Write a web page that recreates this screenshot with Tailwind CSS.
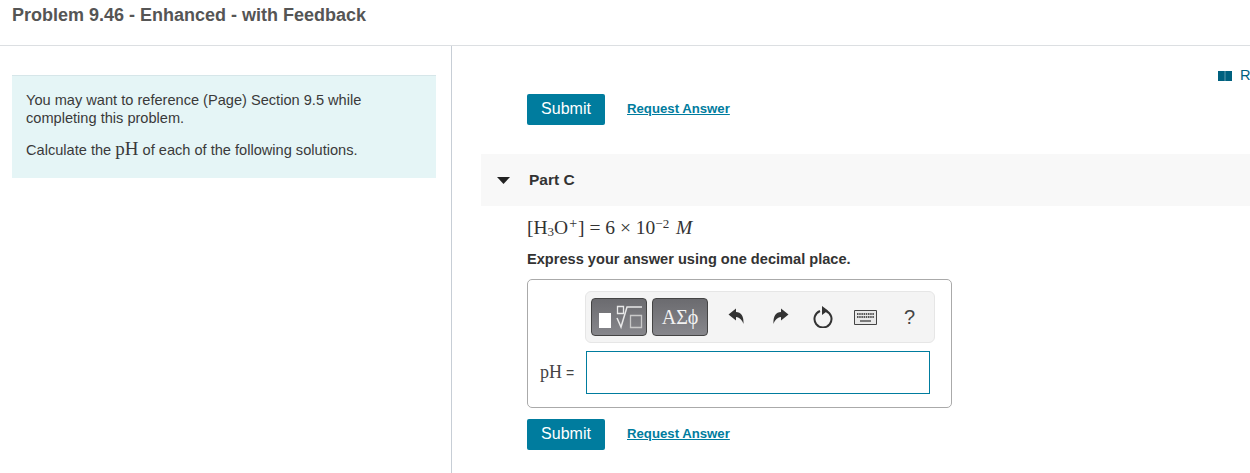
<!DOCTYPE html>
<html lang="en">
<head>
  <meta charset="UTF-8" />
  <title>Problem 9.46</title>
  <script src="https://cdn.jsdelivr.net/npm/@tailwindcss/browser@4"></script>
</head>
<body class="bg-white h-[473px] w-[1250px] overflow-hidden font-['Liberation_Sans',Arial,sans-serif] text-[#333]">

  <header class="h-[46px] border-b border-[#dcdfe2] pl-3 pt-[5px]">
    <h1 class="text-[18px] leading-5 font-bold text-[#555]">Problem 9.46 - Enhanced - with Feedback</h1>
  </header>

  <div class="flex h-[427px]">
    <!-- left column -->
    <aside class="w-[452px] shrink-0 border-r border-[#c7ced6] pl-3 pr-[15px] pt-[29px]">
      <div class="h-[103px] bg-[#e5f5f6] border-t border-[#d6e6e9] pl-[14px] pt-[15px] text-[14.6px] leading-[18px] text-[#3a3a3a]">
        <p>You may want to reference (Page) Section 9.5 while<br />completing this problem.</p>
        <p class="mt-[13px]">Calculate the <span class="font-['Liberation_Serif',serif] text-[19px]">pH</span> of each of the following solutions.</p>
      </div>
    </aside>

    <!-- right column -->
    <main class="w-[798px] shrink-0 overflow-hidden">
      <div class="flex items-center gap-2 pl-[766px] mt-[25px] h-[10px] whitespace-nowrap">
        <svg class="w-[14px] h-[10px] shrink-0" viewBox="0 0 14 10"><path fill="#00617f" d="M0 0h14v10H0z"/><path stroke="#5d9bb0" d="M7 0v10"/></svg>
        <span class="text-[14.6px] text-[#00617f] shrink-0">R</span>
      </div>

      <div class="flex items-center pl-[75px] mt-[13px] gap-[22px]">
        <button class="w-[78px] h-[31px] pb-[2px] bg-[#007c9e] text-white text-base rounded-[2px]">Submit</button>
        <a class="text-[13.2px] font-bold text-[#007c9e] underline pb-[2px]">Request Answer</a>
      </div>

      <section class="ml-[29px] mt-[29px] h-[52px] bg-[#f8f8f8] flex items-center">
        <svg class="ml-4 w-[13px] h-[7px]" viewBox="0 0 13 7"><path fill="#222" d="M0 0h13L6.500 7z"/></svg>
        <span class="ml-[19px] text-[15.5px] font-bold text-[#333]">Part C</span>
      </section>

      <div class="pl-[75px]">
        <p class="mt-[10px] h-[24px] font-['Liberation_Serif',serif] text-[19.5px] leading-6 text-[#333] whitespace-nowrap">[H<span class="text-[13px] leading-none align-[-2px]">3</span>O<span class="ml-[1px] mr-[1px] text-[14px] leading-none align-[6px]">+</span>] = 6 × 10<span class="text-[13px] leading-none align-[6px]">−2</span> <i class="ml-[2px]">M</i></p>
        <p class="mt-[10px] text-[14.6px] leading-[18px] font-bold text-[#333]">Express your answer using one decimal place.</p>

        <div class="mt-[11px] w-[425px] h-[129px] border border-[#aaaaaa] rounded-[5px] pt-[11px]">
          <div class="ml-[57px] w-[350px] h-[52px] bg-[#f4f4f4] border border-[#e6e6e6] rounded-[6px] flex items-center pl-[5px]">
            <button class="w-[56px] h-[38px] rounded-[4px] border border-[#444] bg-gradient-to-b from-[#6b6b6f] to-[#87878c] flex items-center justify-center">
              <svg width="50" height="32" viewBox="0 0 50 32" fill="none">
                <path fill="#fff" d="M5 12h12v15H5z"/>
                <path stroke="#e8e8e8" stroke-width="1.300" d="M23.500 5.500h6v7h-6z"/>
                <path stroke="#e8e8e8" stroke-width="1.500" d="M23 17l4 9 6-20h15"/>
                <path stroke="#c9c9c9" stroke-width="1.300" d="M36.500 14.500h11v12h-11z"/>
              </svg>
            </button>
            <button class="ml-[5px] w-[56px] h-[38px] rounded-[4px] border border-[#444] bg-gradient-to-b from-[#6b6b6f] to-[#87878c] text-[#f2f2f2] text-[20px] font-['Liberation_Serif',serif]">ΑΣϕ</button>

            <svg class="ml-[20px] w-[18px] h-[18px]" viewBox="0 0 18 18"><path fill="#333" d="M.5 6.500L8 .5V4c5 0 8 4 7.500 12-1.500-4-3.500-6.500-7.500-7v3.500z"/></svg>
            <svg class="ml-[25px] w-[18px] h-[18px]" viewBox="0 0 18 18"><path fill="#333" d="M17.500 6.500L10 .5V4c-5 0-8 4-7.500 12 1.500-4 3.500-6.500 7.500-7v3.500z"/></svg>
            <svg class="ml-[24px] w-[20px] h-[22px]" viewBox="0 0 20 22" fill="none"><path stroke="#333" stroke-width="2" d="M7 5a8.500 8.500 0 1 0 6 0"/><path fill="#333" d="M9 0l6 4.500L9 9z"/></svg>
            <svg class="ml-[21px] w-[23px] h-[15px]" viewBox="0 0 23 15"><path fill="#e8e8e8" stroke="#444" d="M.5.500h22v14H.500z"/><path stroke="#555" stroke-dasharray="1.500 .7" stroke-width="2" d="M3 4h17M3 7h17"/><path stroke="#555" stroke-width="1.500" d="M6 11h11"/></svg>
            <span class="ml-[27px] text-[20px] text-[#444]">?</span>
          </div>

          <div class="flex items-center mt-[8px]">
            <span class="ml-3 w-[46px] text-[#444] text-sm whitespace-nowrap"><span class="font-['Liberation_Serif',serif] text-[18px]">pH</span> =</span>
            <input type="text" class="w-[344px] h-[43px] border border-[#007c9e] bg-white" />
          </div>
        </div>

        <div class="flex items-center mt-[11px] gap-[22px]">
          <button class="w-[78px] h-[31px] pb-[2px] bg-[#007c9e] text-white text-base rounded-[2px]">Submit</button>
          <a class="text-[13.2px] font-bold text-[#007c9e] underline pb-[2px]">Request Answer</a>
        </div>
      </div>
    </main>
  </div>
</body>
</html>
